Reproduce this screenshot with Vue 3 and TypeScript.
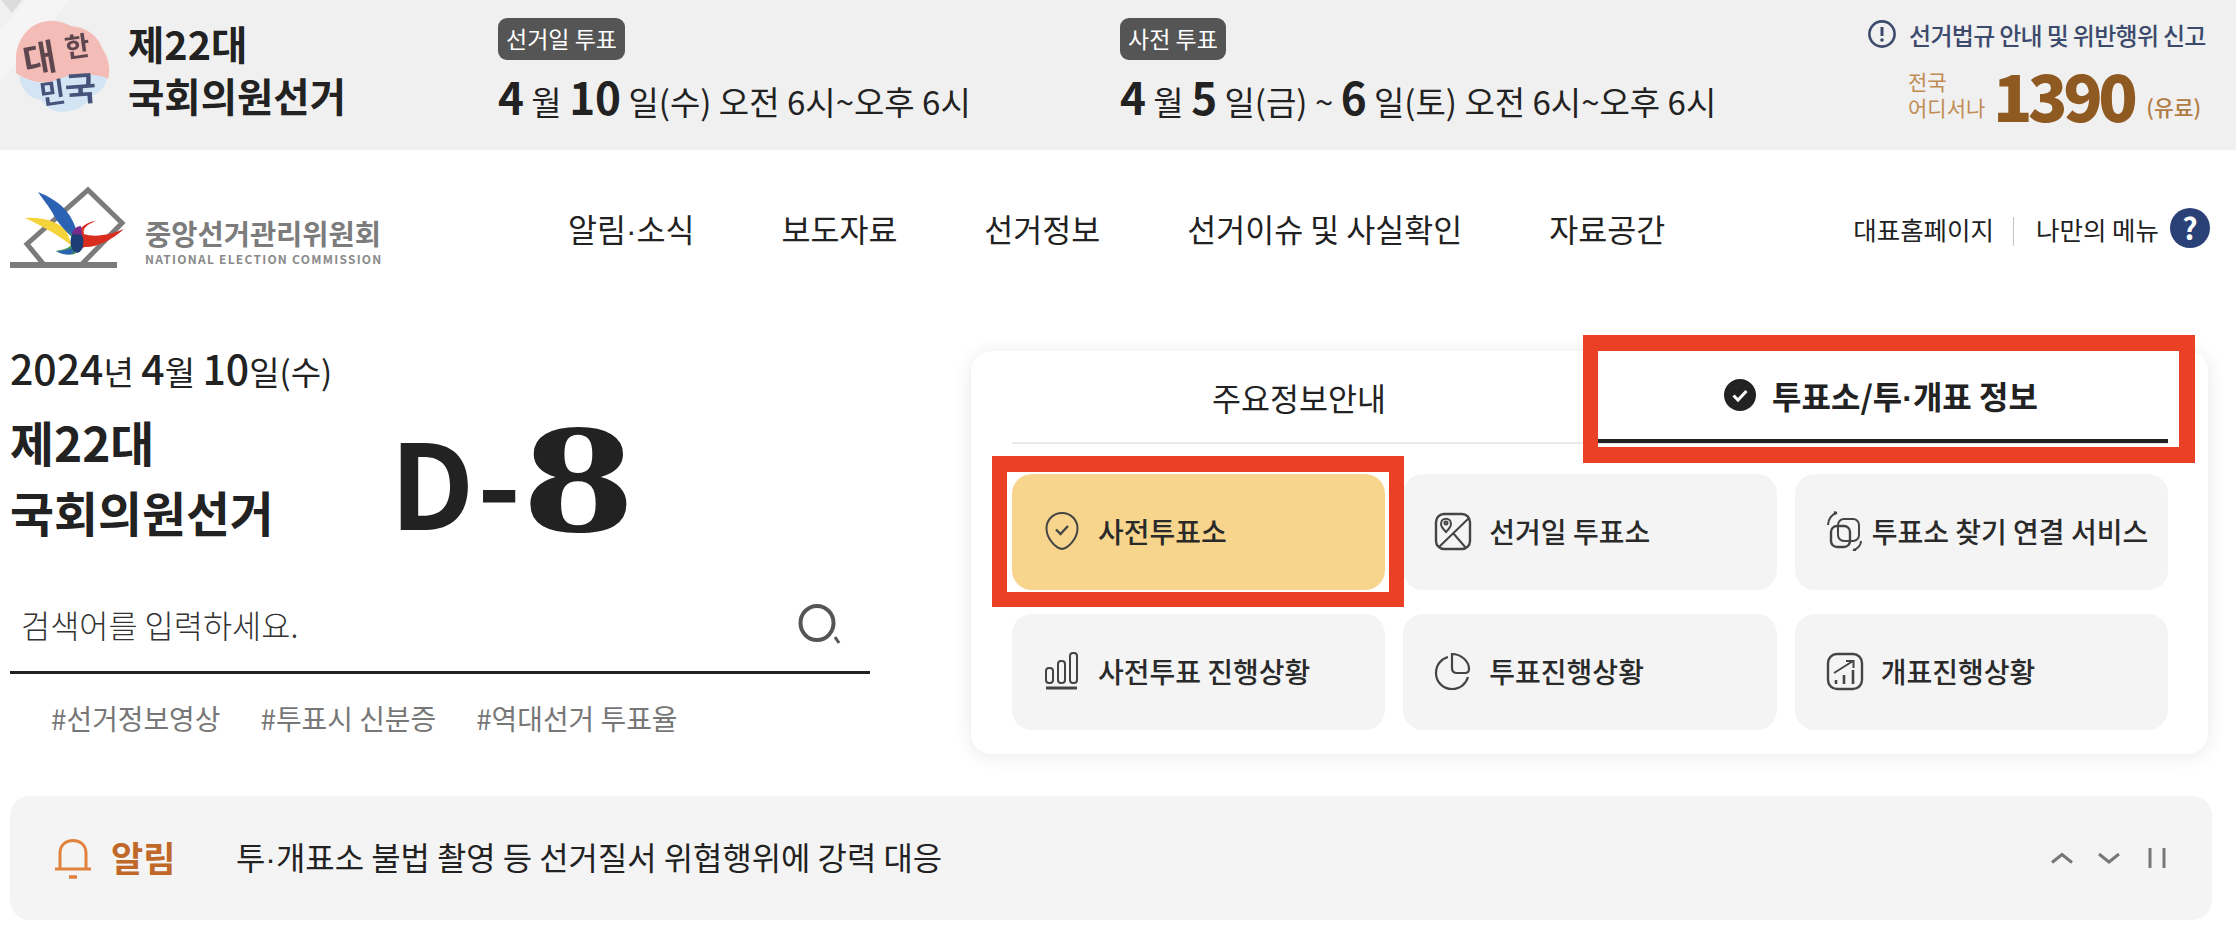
<script setup lang="ts">
const nav: string[] = ['알림·소식', '보도자료', '선거정보', '선거이슈 및 사실확인', '자료공간']
const tags: string[] = ['#선거정보영상', '#투표시 신분증', '#역대선거 투표율']
interface Item { label: string; icon: string; cls?: string }
const items: Item[] = [
  { label: '사전투표소', icon: 'shield', cls: 'active' },
  { label: '선거일 투표소', icon: 'map' },
  { label: '투표소 찾기 연결 서비스', icon: 'sync', cls: 'tight' },
  { label: '사전투표 진행상황', icon: 'bars' },
  { label: '투표진행상황', icon: 'pie' },
  { label: '개표진행상황', icon: 'chart' }
]
</script>

<template>
  <div class="page">
    <section class="band">
      <svg class="corner" width="90" height="90" viewBox="0 0 90 90">
        <path d="M0 82 L70 0 H26 L0 30Z" fill="#f5f5f5" />
        <path d="M1 0 H22 L12 13Z" fill="#dcdcdc" />
      </svg>
      <svg class="emblem" width="102" height="96" viewBox="0 0 100 96">
        <path d="M3 42C2 24 14 6 30 3c10-3 20 0 28 4 14 1 26 8 31 22 6 9 9 20 6 31-22-3-38-2-50 2C28 66 14 62 3 54Z" fill="#f3bcb7" />
        <path d="M6 56c12 8 26 10 40 4 14-6 32-6 48-1-2 10-8 16-16 18-4 10-16 15-28 16-10 0-18-5-22-12C16 80 8 70 6 56Z" fill="#d3e5f5" />
        <text x="10" y="52" class="em1" transform="rotate(-10 30 40)">대</text>
        <text x="52" y="38" class="em2" transform="rotate(-8 60 30)">한</text>
        <text x="26" y="84" class="em3" transform="rotate(-8 40 70)">민</text>
        <text x="52" y="82" class="em4" transform="rotate(-4 66 70)">국</text>
      </svg>
      <div class="band-title">제22대<br />국회의원선거</div>
      <div class="vote vote-a">
        <span class="badge">선거일 투표</span>
        <div class="when"><b>4</b> 월 <b>10</b> 일(수) 오전 6시~오후 6시</div>
      </div>
      <div class="vote vote-b">
        <span class="badge">사전 투표</span>
        <div class="when"><b>4</b> 월 <b>5</b> 일(금) ~ <b>6</b> 일(토) 오전 6시~오후 6시</div>
      </div>
      <div class="report">
        <div class="report-top">
          <svg width="30" height="30" viewBox="0 0 30 30" fill="none">
            <circle cx="15" cy="15" r="12.6" stroke="#3c4a6c" stroke-width="2.6" />
            <path d="M15 8v9" stroke="#3c4a6c" stroke-width="3" />
            <circle cx="15" cy="21" r="1.8" fill="#3c4a6c" />
          </svg>
          <span>선거법규 안내 및 위반행위 신고</span>
        </div>
        <div class="report-num">
          <span class="any">전국<br />어디서나</span>
          <span class="tel">1390</span>
          <span class="paid">(유료)</span>
        </div>
      </div>
    </section>

    <header class="head">
      <div class="logo">
        <svg class="logo-mark" width="124" height="86" viewBox="8 186 124 86" fill="none">
          <path d="M45 268 L27 246 L88 192 L122 225 L80 268" stroke="#7b7b7b" stroke-width="5" />
          <rect x="10" y="264" width="107" height="6" fill="#7b7b7b" />
          <path d="M96 223C86 224 78 230 76 240c0 10 4 14 8 9 12 1 28-7 40-18-12 5-28 9-40 5-2-6 4-10 12-13Z" fill="#d92d20" />
          <path d="M25 220c15-1 30 2 41 12l6 16C60 238 42 228 25 220Z" fill="#f5d33a" />
          <path d="M38 194c10 4 24 11 32 24 6 10 8 18 8 26-10-8-20-18-26-30-5-8-10-14-14-20Z" fill="#2c62b4" />
          <path d="M66 230c6 6 10 12 11 20l-2 6c-6 1-12 1-19-3 8-1 16-4 18-10-2-5-5-9-8-13Z" fill="#43a047" />
          <path d="M56 253c6 0 11-1 15-3l3 5c-6 3-13 1-18-2Z" fill="#2c62b4" />
          <ellipse cx="77" cy="244" rx="6.5" ry="11" fill="#1d3d76" />
          <path d="M72 236c1-5 5-8 9-8l1 9Z" fill="#7a2b8c" />
        </svg>
        <div class="logo-text">
          <div class="logo-ko">중앙선거관리위원회</div>
          <div class="logo-en">NATIONAL ELECTION COMMISSION</div>
        </div>
      </div>
      <nav class="nav">
        <a v-for="n in nav" :key="n"><template v-for="(part, i) in n.split('·')" :key="i"><span v-if="i" class="dot">·</span>{{ part }}</template></a>
      </nav>
      <div class="util">
        <span>대표홈페이지</span>
        <i class="sep"></i>
        <span>나만의 메뉴</span>
        <span class="help">?</span>
      </div>
    </header>

    <main class="main">
      <div class="left">
        <div class="date"><b>2024</b>년 <b>4</b>월 <b>10</b>일(수)</div>
        <div class="hero">
          <h1 class="hero-title">제22대<br />국회의원선거</h1>
          <div class="dday"><span class="dminus">D-</span><span class="eight">8</span></div>
        </div>
        <div class="search">
          <span class="ph">검색어를 입력하세요.</span>
          <svg width="44" height="42" viewBox="0 0 44 42" fill="none">
            <ellipse cx="19" cy="20" rx="16.5" ry="17" stroke="#555" stroke-width="4" />
            <path d="M37 34l4 6" stroke="#555" stroke-width="3" />
          </svg>
        </div>
        <div class="tags">
          <span v-for="t in tags" :key="t">{{ t }}</span>
        </div>
      </div>

      <div class="card">
        <div class="tabs">
          <div class="tab">주요정보안내</div>
          <div class="tab on">
            <svg width="32" height="32" viewBox="0 0 32 32">
              <circle cx="16" cy="16" r="16" fill="#222" />
              <path d="M9.500 16.500l4.500 4.500 8.500-9" fill="none" stroke="#fff" stroke-width="3" />
            </svg>
            <span>투표소/투<span class="dot">·</span>개표 정보</span>
          </div>
        </div>
        <div class="grid">
          <div v-for="it in items" :key="it.label" class="cell" :class="it.cls">
            <svg class="ico" width="40" height="40" viewBox="0 0 40 40" fill="none" stroke="#444" stroke-width="2">
              <template v-if="it.icon === 'shield'">
                <path d="M20 2C11 2 4.500 9 4.500 17.500 4.500 27 13 37 20 38c7-1 15.500-11 15.500-20.500C35.500 9 29 2 20 2Z" />
                <path d="M14 18.500l4.500 4.500 7.500-8" stroke-width="2.400" />
              </template>
              <template v-else-if="it.icon === 'map'">
                <rect x="3" y="3" width="34" height="35" rx="8" stroke-width="2.400" />
                <path d="M36 7 L6 36 M20 22 L33 37" />
                <circle cx="13" cy="12" r="1.500" />
                <path d="M8 13c0-7 10-7 10 0 0 3-3 6-5 8-2-2-5-5-5-8Z" />
              </template>
              <template v-else-if="it.icon === 'sync'">
                <rect x="13" y="8" width="21" height="22" rx="6" />
                <rect x="6" y="15" width="19" height="21" rx="6" stroke-width="2.400" />
                <path d="M3 14C3 8 7 3 12 2M12 2l-3-1M36 30c0 4-3 8-8 9M28 39l3 1" />
              </template>
              <template v-else-if="it.icon === 'bars'">
                <rect x="4" y="17" width="7" height="15" rx="3" />
                <rect x="16" y="10" width="7" height="22" rx="3" />
                <rect x="28" y="2" width="7" height="30" rx="3" />
                <path d="M4 37h31" stroke-width="3" />
              </template>
              <template v-else-if="it.icon === 'pie'">
                <path d="M15 6C8 8 3 14 3 22c0 9 7 16 16 16 8 0 14-5 16-12" stroke-width="2.200" />
                <path d="M19 3c9 0 17 7 17 15 0 3-2 4-4 4H24c-3 0-5-2-5-5Z" stroke-width="2.200" />
              </template>
              <template v-else>
                <rect x="3" y="3" width="34" height="35" rx="9" stroke-width="2.400" />
                <path d="M9 22 L28 10 M21 10h7.500v7" />
                <path d="M11 33v-4M19 33v-9M28 33V19" stroke-width="2.600" />
              </template>
            </svg>
            <span>{{ it.label }}</span>
          </div>
        </div>
      </div>
    </main>

    <section class="alert">
      <svg class="bell" width="38" height="40" viewBox="0 0 38 40" fill="none" stroke="#e0823e" stroke-width="3">
        <path d="M1 30h36M6 30V14C6 6 12 1.500 19 1.500S32 6 32 14v16" />
        <path d="M15 38h8" stroke-width="3.500" />
      </svg>
      <strong>알림</strong>
      <p>투<span class="dot">·</span>개표소 불법 촬영 등 선거질서 위협행위에 강력 대응</p>
      <div class="ctrl">
        <svg width="24" height="12" viewBox="0 0 24 12" fill="none"><path d="M2 10.500 12 2.500l10 8" /></svg>
        <svg width="24" height="12" viewBox="0 0 24 12" fill="none"><path d="M2 2l10 8 10-8" /></svg>
        <svg class="pause" width="18" height="22" viewBox="0 0 18 22" fill="none"><path d="M2 1v20M16 1v20" /></svg>
      </div>
    </section>

    <div class="mark mark-tab"></div>
    <div class="mark mark-cell"></div>
  </div>
</template>

<style scoped>
.page {
  position: relative;
  width: 2236px;
  height: 938px;
  overflow: hidden;
  background: #fff;
  color: #222;
  font-family: "Noto Sans CJK KR", "Noto Sans", sans-serif;
}
.dot { font-family: "Liberation Sans", sans-serif; }
.band {
  position: relative;
  display: flex;
  height: 150px;
  background: #f0f0f0;
  overflow: hidden;
}
.corner { position: absolute; left: 0; top: 0; }
.emblem {
  position: absolute;
  left: 12px;
  top: 19px;
  filter: blur(0.7px);
}
.em1 { font-size: 36px; font-weight: 700; fill: #5e464e; }
.em2 { font-size: 27px; font-weight: 700; fill: #5e464e; }
.em3 { font-size: 28px; font-weight: 700; fill: #46527a; }
.em4 { font-size: 34px; font-weight: 700; fill: #46527a; }
.band-title {
  margin-left: 128px;
  width: 370px;
  padding-top: 17px;
  font-size: 39.500px;
  line-height: 52px;
  font-weight: 700;
  white-space: nowrap;
}
.vote {
  padding-top: 18px;
  display: flex;
  flex-direction: column;
  align-items: flex-start;
}
.vote-a { width: 622px; }
.vote-b { width: 700px; }
.badge {
  height: 42px;
  padding: 0 8px;
  border-radius: 9px;
  background: #555;
  color: #fff;
  font-size: 23px;
  line-height: 40px;
}
.when {
  margin-top: 6px;
  font-size: 33px;
  line-height: 60px;
  white-space: nowrap;
}
.when b {
  font-size: 44px;
  font-weight: 700;
}
.report {
  position: absolute;
  right: 28px;
  top: 18px;
  width: 341px;
}
.report-top {
  display: flex;
  align-items: center;
  gap: 12px;
  height: 32px;
  color: #3c4a6c;
  font-size: 24px;
  font-weight: 500;
  letter-spacing: -0.700px;
  white-space: nowrap;
}
.report-top svg { flex: none; }
.report-num {
  position: relative;
  display: flex;
  align-items: center;
  margin-top: 14px;
  padding-left: 41px;
  height: 60px;
  white-space: nowrap;
}
.any {
  width: 85px;
  font-size: 21px;
  line-height: 26px;
  color: #c08c54;
}
.tel {
  font-size: 65px;
  line-height: 60px;
  font-weight: 900;
  letter-spacing: -4.500px;
  color: #8f5a22;
}
.paid {
  margin: 24px 0 0 13px;
  font-size: 21.500px;
  font-weight: 500;
  color: #b07c44;
}
.head {
  display: flex;
  align-items: center;
  height: 156px;
}
.logo {
  display: flex;
  align-items: flex-end;
  width: 568px;
  padding: 0 0 9px 8px;
  box-sizing: border-box;
}
.logo-mark { filter: blur(0.4px); flex: none; margin: 2px 0 -4px; }
.logo-text { margin-left: 13px; }
.logo-ko {
  font-size: 28.500px;
  line-height: 34px;
  font-weight: 700;
  color: #7c7c7c;
  white-space: nowrap;
}
.logo-en {
  margin-top: 2px;
  font-size: 12px;
  line-height: 14px;
  font-weight: 700;
  letter-spacing: 1.250px;
  color: #8a8a8a;
  white-space: nowrap;
}
.nav {
  display: flex;
  gap: 87px;
  font-size: 31.500px;
  font-weight: 400;
  white-space: nowrap;
}
.util {
  display: flex;
  align-items: center;
  margin-left: auto;
  padding-right: 26px;
  font-size: 25.500px;
  white-space: nowrap;
}
.sep {
  width: 1px;
  height: 29px;
  margin: 6px 22px 0 19px;
  background: #c4c4c4;
}
.help {
  width: 40px;
  height: 40px;
  margin-left: 11px;
  border-radius: 50%;
  background: #2a4178;
  color: #fff;
  font-size: 30px;
  line-height: 38px;
  font-weight: 700;
  text-align: center;
}
.main {
  display: flex;
  justify-content: space-between;
  padding: 45px 28px 0 10px;
  height: 403px;
}
.left { width: 860px; }
.date {
  height: 42px;
  font-size: 33px;
  line-height: 32px;
  white-space: nowrap;
}
.date b { font-size: 41px; font-weight: 500; }
.hero {
  display: flex;
  margin-top: 14px;
  height: 144px;
}
.hero-title {
  width: 380px;
  margin: 0;
  font-size: 47.800px;
  line-height: 70px;
  font-weight: 700;
  white-space: nowrap;
}
.dday {
  display: flex;
  align-items: center;
  line-height: 144px;
  white-space: nowrap;
}
.dminus {
  font-size: 118px;
  font-weight: 700;
  letter-spacing: 3px;
}
.eight {
  display: inline-block;
  margin-left: -1px;
  font-family: "Liberation Serif", serif;
  font-size: 156px;
  font-weight: 700;
  line-height: 144px;
  transform: scaleX(1.42);
  transform-origin: left center;
}
.search {
  display: flex;
  align-items: center;
  justify-content: space-between;
  box-sizing: border-box;
  height: 97px;
  margin-top: 26px;
  padding: 0 28px 0 11px;
  border-bottom: 3px solid #222;
}
.ph {
  font-size: 31.700px;
  font-weight: 300;
  color: #333;
}
.tags {
  display: flex;
  gap: 40px;
  padding: 24px 0 0 41px;
  font-size: 27.900px;
  line-height: 40px;
  color: #777;
  white-space: nowrap;
}
.card {
  box-sizing: border-box;
  width: 1237px;
  height: 403px;
  padding: 0 40px 24px 41px;
  border-radius: 20px;
  background: #fff;
  box-shadow: 0 2px 18px rgba(40, 40, 70, 0.1);
}
.tabs {
  display: grid;
  grid-template-columns: 1fr 1fr;
  gap: 8px;
  height: 93px;
  border-bottom: 2px solid #e9e9ee;
  box-sizing: border-box;
}
.tab {
  display: flex;
  align-items: center;
  justify-content: center;
  gap: 16px;
  font-size: 31.500px;
  white-space: nowrap;
}
.tab.on {
  margin-bottom: -1px;
  border-bottom: 4px solid #222;
  font-size: 32px;
  font-weight: 700;
}
.grid {
  display: grid;
  grid-template-columns: repeat(3, 1fr);
  grid-auto-rows: 116px;
  gap: 24px 18px;
  margin-top: 30px;
}
.cell {
  display: flex;
  align-items: center;
  gap: 16px;
  padding-left: 30px;
  padding-bottom: 2px;
  box-sizing: border-box;
  border-radius: 20px;
  background: #f4f4f5;
  font-size: 28px;
  font-weight: 500;
  color: #2a2a2a;
  white-space: nowrap;
}
.cell.active { background: #f8d58c; }
.cell.tight { gap: 7px; }
.ico { flex: none; }
.alert {
  display: flex;
  align-items: center;
  margin: 42px 24px 0 10px;
  height: 124px;
  padding: 0 46px 0 44px;
  border-radius: 20px;
  background: #f4f4f4;
}
.bell { flex: none; margin-top: 2px; }
.alert strong {
  margin-left: 19px;
  width: 125px;
  font-size: 35px;
  font-weight: 700;
  color: #c0672a;
  margin-bottom: 3px;
}
.alert p {
  margin: 0 0 4px;
  font-size: 31.900px;
  font-weight: 400;
}
.ctrl {
  display: flex;
  align-items: center;
  margin-left: auto;
  gap: 23px;
}
.ctrl svg {
  stroke: #777;
  stroke-width: 3;
}
.ctrl .pause { margin-left: 4px; }
.mark {
  position: absolute;
  box-sizing: border-box;
  border: 15px solid #ea4126;
}
.mark-tab {
  left: 1583px;
  top: 335px;
  width: 612px;
  height: 128px;
  border-width: 16px 16px 16px 15px;
}
.mark-cell {
  left: 992px;
  top: 456px;
  width: 412px;
  height: 151px;
  border-width: 16px 15px 15px 15px;
}
</style>

<style>
html, body { margin: 0; background: #fff; }
</style>
